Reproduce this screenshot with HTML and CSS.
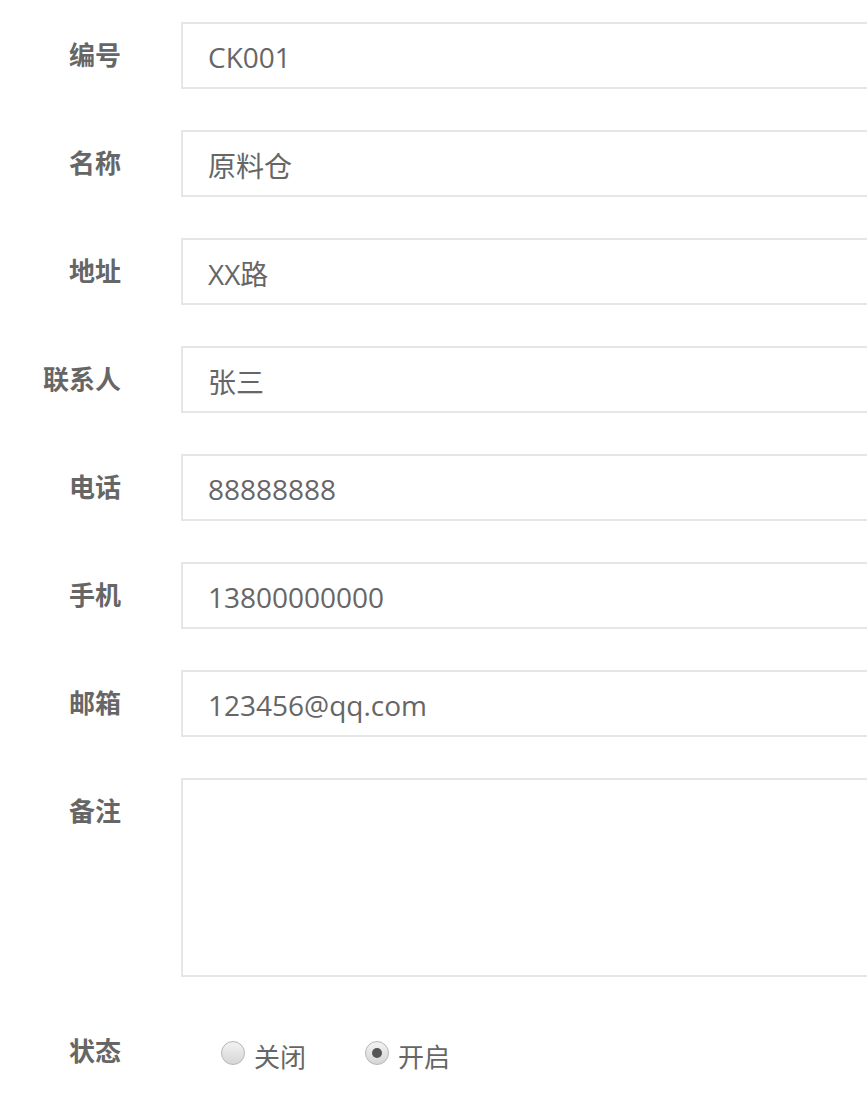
FILE: index.html
```html
<!DOCTYPE html>
<html lang="zh-CN">
<head>
    <meta charset="UTF-8">
    <meta name="viewport" content="width=device-width, initial-scale=1.0">
    <title>仓库编辑</title>
    <link rel="stylesheet" href="styles.css">
</head>
<body>
  <form class="edit-form">
    <div class="form-item">
      <label class="form-label">编号</label>
      <div class="form-block"><input class="form-input" type="text" value="CK001"></div>
    </div>
    <div class="form-item">
      <label class="form-label">名称</label>
      <div class="form-block"><input class="form-input" type="text" value="原料仓"></div>
    </div>
    <div class="form-item">
      <label class="form-label">地址</label>
      <div class="form-block"><input class="form-input" type="text" value="XX路"></div>
    </div>
    <div class="form-item">
      <label class="form-label">联系人</label>
      <div class="form-block"><input class="form-input" type="text" value="张三"></div>
    </div>
    <div class="form-item">
      <label class="form-label">电话</label>
      <div class="form-block"><input class="form-input" type="text" value="88888888"></div>
    </div>
    <div class="form-item">
      <label class="form-label">手机</label>
      <div class="form-block"><input class="form-input" type="text" value="13800000000"></div>
    </div>
    <div class="form-item">
      <label class="form-label">邮箱</label>
      <div class="form-block"><input class="form-input" type="text" value="123456@qq.com"></div>
    </div>
    <div class="form-item">
      <label class="form-label">备注</label>
      <div class="form-block"><textarea class="form-textarea"></textarea></div>
    </div>
    <div class="form-item">
      <label class="form-label">状态</label>
      <div class="form-block radio-group">
        <label class="radio"><span class="radio-dot"></span>关闭</label>
        <label class="radio checked"><span class="radio-dot"></span>开启</label>
      </div>
    </div>
  </form>
</body>
</html>
```

FILE: styles.css
```css
* { margin: 0; padding: 0; box-sizing: border-box; }
body {
  font-family: 'Open Sans', 'Noto Sans CJK SC', sans-serif;
  background: #fff;
  color: #666;
  overflow: hidden;
}
.edit-form {
  padding-top: 22px;
  width: 1000px;
}
.form-item {
  display: flex;
  align-items: flex-start;
  margin-bottom: 41px;
}
.form-label {
  width: 121px;
  margin-right: 60px;
  text-align: right;
  font-size: 26px;
  font-weight: 700;
  line-height: 67px;
  color: #666;
}
.form-block { flex: 1; }
.form-input,
.form-textarea {
  display: block;
  width: 100%;
  border: 2px solid #e6e6e6;
  background: #fff;
  color: #666;
  font-family: 'Open Sans', 'Noto Sans CJK SC', sans-serif;
  font-size: 28px;
  outline: none;
}
.form-input {
  height: 67px;
  padding-left: 25px;
  padding-top: 2px;
}
.form-textarea {
  height: 199px;
  padding: 12px 25px;
  resize: none;
}
.radio-group {
  display: flex;
  align-items: center;
  padding-left: 40px;
  height: 76px;
}
.radio {
  display: flex;
  align-items: center;
  font-size: 26px;
  margin-right: 59px;
  color: #666;
}
.radio-dot {
  width: 24px;
  height: 24px;
  border-radius: 50%;
  border: 1px solid #b5b5b5;
  background: linear-gradient(#f2f2f2, #d6d6d6);
  margin-right: 9px;
  margin-top: -6px;
  position: relative;
}
.radio.checked .radio-dot::after {
  content: "";
  position: absolute;
  left: 6px;
  top: 6px;
  width: 10px;
  height: 10px;
  border-radius: 50%;
  background: #555;
}
```
